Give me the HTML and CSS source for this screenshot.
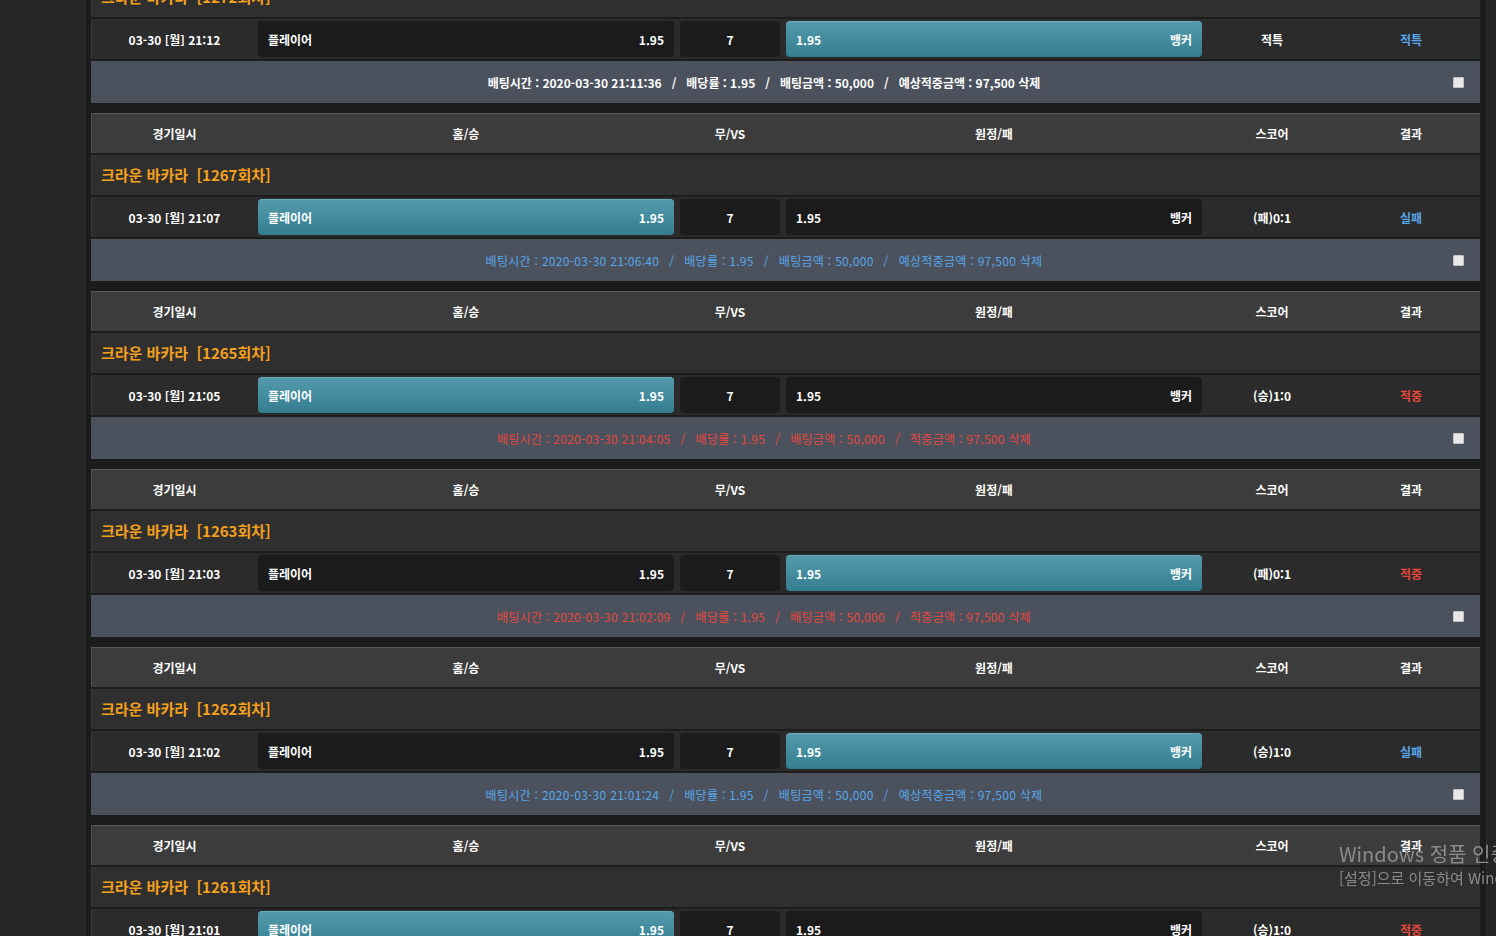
FILE: index.html
```html
<!DOCTYPE html>
<html lang="ko">
<head>
    <meta charset="utf-8">
    <title>배팅내역</title>
    <link rel="stylesheet" href="styles.css">
</head>
<body>
<div class="page">
    <div class="sidebar"></div>

    <div class="main">
        <div class="list">

            <!-- 1272 -->
            <div class="bet">
                <div class="row head">
                    <div>경기일시</div><div>홈/승</div><div>무/VS</div><div>원정/패</div><div>스코어</div><div>결과</div>
                </div>
                <div class="row title">크라운 바카라&nbsp; [1272회차]</div>
                <div class="row match">
                    <div class="date">03-30 [월] 21:12</div>
                    <div class="pick"><span>플레이어</span><span>1.95</span></div>
                    <div class="pick draw">7</div>
                    <div class="pick on"><span>1.95</span><span>뱅커</span></div>
                    <div class="score">적특</div>
                    <div class="result blue">적특</div>
                </div>
                <div class="row info">
                    <div class="detail">배팅시간 : 2020-03-30 21:11:36<span class="sep">/</span>배당률 : 1.95<span class="sep">/</span>배팅금액 : 50,000<span class="sep">/</span>예상적중금액 : 97,500 삭제</div>
                    <div class="check"><input type="checkbox"></div>
                </div>
            </div>

            <!-- 1267 -->
            <div class="bet">
                <div class="row head">
                    <div>경기일시</div><div>홈/승</div><div>무/VS</div><div>원정/패</div><div>스코어</div><div>결과</div>
                </div>
                <div class="row title">크라운 바카라&nbsp; [1267회차]</div>
                <div class="row match">
                    <div class="date">03-30 [월] 21:07</div>
                    <div class="pick on"><span>플레이어</span><span>1.95</span></div>
                    <div class="pick draw">7</div>
                    <div class="pick"><span>1.95</span><span>뱅커</span></div>
                    <div class="score">(패)0:1</div>
                    <div class="result blue">실패</div>
                </div>
                <div class="row info">
                    <div class="detail blue">배팅시간 : 2020-03-30 21:06:40<span class="sep">/</span>배당률 : 1.95<span class="sep">/</span>배팅금액 : 50,000<span class="sep">/</span>예상적중금액 : 97,500 삭제</div>
                    <div class="check"><input type="checkbox"></div>
                </div>
            </div>

            <!-- 1265 -->
            <div class="bet">
                <div class="row head">
                    <div>경기일시</div><div>홈/승</div><div>무/VS</div><div>원정/패</div><div>스코어</div><div>결과</div>
                </div>
                <div class="row title">크라운 바카라&nbsp; [1265회차]</div>
                <div class="row match">
                    <div class="date">03-30 [월] 21:05</div>
                    <div class="pick on"><span>플레이어</span><span>1.95</span></div>
                    <div class="pick draw">7</div>
                    <div class="pick"><span>1.95</span><span>뱅커</span></div>
                    <div class="score">(승)1:0</div>
                    <div class="result red">적중</div>
                </div>
                <div class="row info">
                    <div class="detail red">배팅시간 : 2020-03-30 21:04:05<span class="sep">/</span>배당률 : 1.95<span class="sep">/</span>배팅금액 : 50,000<span class="sep">/</span>적중금액 : 97,500 삭제</div>
                    <div class="check"><input type="checkbox"></div>
                </div>
            </div>

            <!-- 1263 -->
            <div class="bet">
                <div class="row head">
                    <div>경기일시</div><div>홈/승</div><div>무/VS</div><div>원정/패</div><div>스코어</div><div>결과</div>
                </div>
                <div class="row title">크라운 바카라&nbsp; [1263회차]</div>
                <div class="row match">
                    <div class="date">03-30 [월] 21:03</div>
                    <div class="pick"><span>플레이어</span><span>1.95</span></div>
                    <div class="pick draw">7</div>
                    <div class="pick on"><span>1.95</span><span>뱅커</span></div>
                    <div class="score">(패)0:1</div>
                    <div class="result red">적중</div>
                </div>
                <div class="row info">
                    <div class="detail red">배팅시간 : 2020-03-30 21:02:09<span class="sep">/</span>배당률 : 1.95<span class="sep">/</span>배팅금액 : 50,000<span class="sep">/</span>적중금액 : 97,500 삭제</div>
                    <div class="check"><input type="checkbox"></div>
                </div>
            </div>

            <!-- 1262 -->
            <div class="bet">
                <div class="row head">
                    <div>경기일시</div><div>홈/승</div><div>무/VS</div><div>원정/패</div><div>스코어</div><div>결과</div>
                </div>
                <div class="row title">크라운 바카라&nbsp; [1262회차]</div>
                <div class="row match">
                    <div class="date">03-30 [월] 21:02</div>
                    <div class="pick"><span>플레이어</span><span>1.95</span></div>
                    <div class="pick draw">7</div>
                    <div class="pick on"><span>1.95</span><span>뱅커</span></div>
                    <div class="score">(승)1:0</div>
                    <div class="result blue">실패</div>
                </div>
                <div class="row info">
                    <div class="detail blue">배팅시간 : 2020-03-30 21:01:24<span class="sep">/</span>배당률 : 1.95<span class="sep">/</span>배팅금액 : 50,000<span class="sep">/</span>예상적중금액 : 97,500 삭제</div>
                    <div class="check"><input type="checkbox"></div>
                </div>
            </div>

            <!-- 1261 -->
            <div class="bet">
                <div class="row head">
                    <div>경기일시</div><div>홈/승</div><div>무/VS</div><div>원정/패</div><div>스코어</div><div>결과</div>
                </div>
                <div class="row title">크라운 바카라&nbsp; [1261회차]</div>
                <div class="row match">
                    <div class="date">03-30 [월] 21:01</div>
                    <div class="pick on"><span>플레이어</span><span>1.95</span></div>
                    <div class="pick draw">7</div>
                    <div class="pick"><span>1.95</span><span>뱅커</span></div>
                    <div class="score">(승)1:0</div>
                    <div class="result red">적중</div>
                </div>
                <div class="row info">
                    <div class="detail red">배팅시간 : 2020-03-30 21:00:12<span class="sep">/</span>배당률 : 1.95<span class="sep">/</span>배팅금액 : 50,000<span class="sep">/</span>적중금액 : 97,500 삭제</div>
                    <div class="check"><input type="checkbox"></div>
                </div>
            </div>

        </div>
    </div>

    <div class="rail"></div>
</div>

<div class="watermark">
    <div class="wm-title">Windows 정품 인증</div>
    <div class="wm-sub">[설정]으로 이동하여 Windows를 정품 인증합니다.</div>
</div>
</body>
</html>
```

FILE: styles.css
```css
html, body {
    margin: 0;
    padding: 0;
    height: 100%;
    overflow: hidden;
}

body {
    background-color: #1c1c1c;
    font-family: "Noto Sans CJK KR", "Noto Sans", sans-serif;
    font-size: 12px;
    color: #fff;
}

.page {
    display: flex;
    height: 936px;
}

.sidebar {
    width: 86px;
    flex-shrink: 0;
    background-color: #272727;
}

.main {
    width: 1389px;
    flex-shrink: 0;
    margin-left: 5px;
    margin-right: 6px;
}

.rail {
    flex: 1;
    background-color: #242424;
    border-left: 1px solid #2c2c2c;
}

/* page is scrolled part way down the list */
.list {
    margin-top: -65px;
}

.bet {
    margin-bottom: 10px;
}

.row {
    height: 40px;
    border-bottom: 2px solid #1d1d1d;
    box-sizing: content-box;
}

.head {
    display: grid;
    grid-template-columns: 167px 416px 112px 416px 140px 138px;
    align-items: center;
    height: 39px;
    background-color: #3c3c3c;
    border-top: 1px solid #595959;
    box-shadow: inset 1px 0 0 #4c4c4c;
    font-weight: bold;
    text-align: center;
}

.title {
    background-color: #2f2f2f;
    box-shadow: inset 1px 0 0 #3a3a3a;
    padding-left: 10px;
    line-height: 40px;
    font-size: 15px;
    font-weight: bold;
    color: #f4a01c;
}

.match {
    display: grid;
    grid-template-columns: 167px 416px 6px 100px 6px 416px 140px 138px;
    align-items: center;
    background-color: #2b2b2b;
    box-shadow: inset 1px 0 0 #3a3a3a;
    font-weight: bold;
}

.date, .score, .result {
    text-align: center;
}

.pick {
    height: 36px;
    display: flex;
    justify-content: space-between;
    align-items: center;
    padding: 0 10px;
    background-color: #1b1b1b;
    border-radius: 4px;
    box-sizing: border-box;
}

.match .pick:nth-child(3) {
    grid-column: 4;
}

.match .pick:nth-child(4) {
    grid-column: 6;
}

.pick.draw {
    justify-content: center;
}

.pick.on {
    background: linear-gradient(#539bac, #347c8f);
    border-top: 1px solid #6aaebd;
}

.info {
    height: 42px;
    border-bottom: 0;
    display: grid;
    grid-template-columns: 1fr 43px;
    align-items: center;
    background-color: #4b525d;
}

.detail {
    text-align: center;
    font-weight: bold;
}

.sep {
    margin: 0 10px;
}

.check {
    text-align: center;
    line-height: 0;
}

.check input {
    appearance: none;
    width: 11px;
    height: 11px;
    margin: 0;
    background-color: #e8e8e8;
    border: 1px solid #c4c4c4;
    border-radius: 1px;
}

.blue {
    color: #58a6ea;
}

.red {
    color: #e5473d;
}

.detail.blue, .detail.red {
    font-weight: normal;
    letter-spacing: 0.3px;
}

.watermark {
    position: fixed;
    left: 1339px;
    top: 840px;
    white-space: nowrap;
    color: #8b8b8b;
    font-family: "Noto Sans CJK KR", "Open Sans", sans-serif;
}

.wm-title {
    font-size: 20px;
    line-height: 28px;
}

.wm-sub {
    font-size: 15px;
    line-height: 20px;
}
```
